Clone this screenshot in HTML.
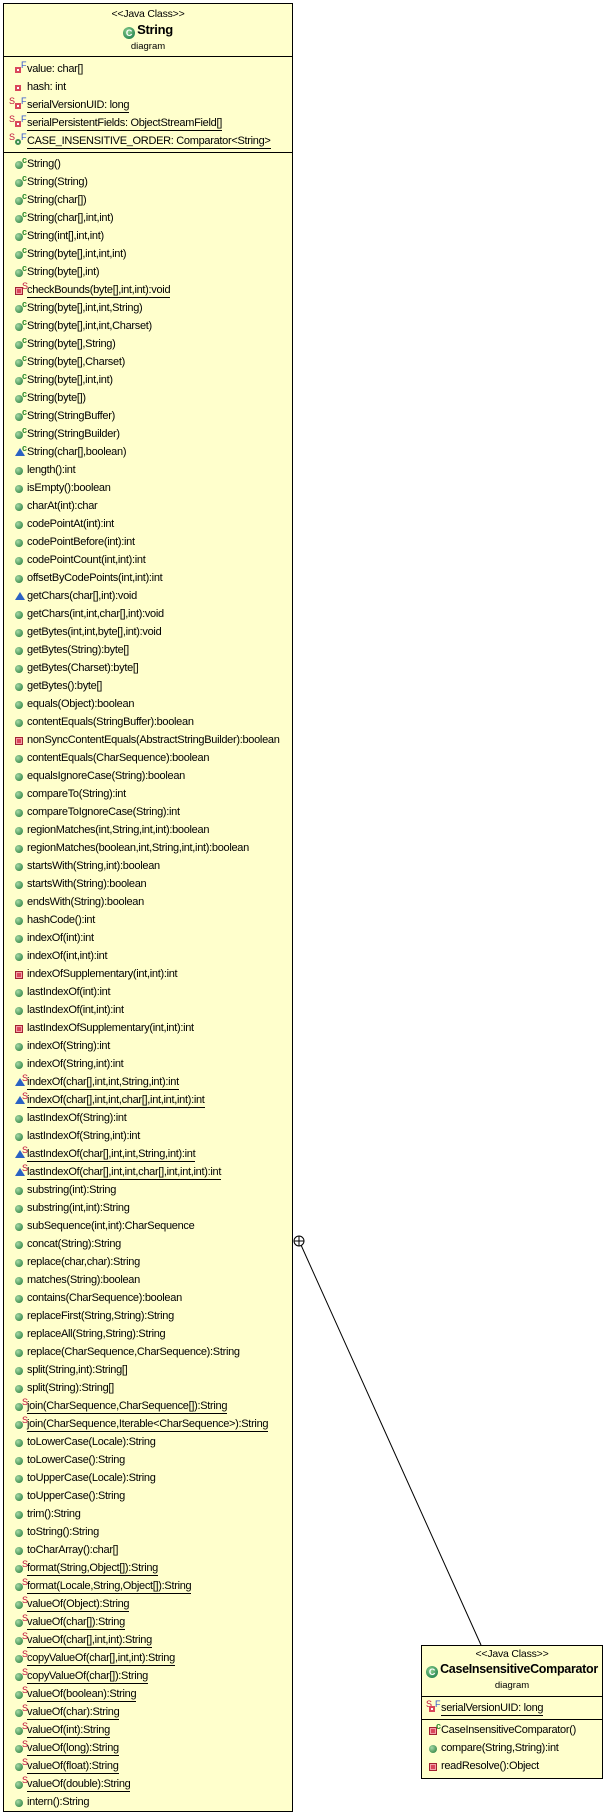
<!DOCTYPE html>
<html><head><meta charset="utf-8"><style>
*{margin:0;padding:0;box-sizing:border-box}
body{width:605px;height:1815px;background:#fff;position:relative;font-family:"Liberation Sans",sans-serif;font-size:11px;color:#000;overflow:hidden}
.box{position:absolute;background:#ffffcc;border:1px solid #000}
.hd{text-align:center;border-bottom:1px solid #000}
.st{font-size:10.5px;letter-spacing:-0.2px}
.tt{font-weight:bold;font-size:13px;letter-spacing:-0.3px}
.dg{font-size:9.5px}
.gc{display:inline-block;width:12px;height:12px;border-radius:50%;background:radial-gradient(circle at 40% 35%,#8fd28f,#2e8b57 70%);vertical-align:-2px;margin-right:2px;color:#fff;font-size:9px;line-height:12px;font-weight:bold;text-align:center}
.sec{border-bottom:1px solid #000}
.r{height:18px;line-height:18px;position:relative;padding-left:23px;white-space:nowrap;letter-spacing:-0.3px}
.t{display:inline-block;line-height:14px}
.u .t{border-bottom:1px solid #000}
.i{position:absolute;left:11px;top:6px}
.g{width:8px;height:8px;border-radius:50%;background:radial-gradient(circle at 35% 35%,#a6d8a6,#3e8e4e 75%)}
.q{width:8px;height:8px;background:#d9475a;border:1px solid #a02030;box-shadow:inset 0 0 0 1px #f3a0a8}
.b{width:0;height:0;border-left:5px solid transparent;border-right:5px solid transparent;border-bottom:8px solid #2b62c4;top:5px}
.p{position:absolute;left:18px;top:-4px;font-size:9px;letter-spacing:0}
.pc{color:#2e8b2e;font-weight:bold}
.ps{color:#c0103c}
.fi{position:absolute;left:11px;top:7px;width:6px;height:6px;background:#fff;border:2px solid #d9475a}
.ff{position:absolute;top:-4px;font-size:9px;color:#3355cc;letter-spacing:0}
.fs{position:absolute;left:7px;top:-4px;font-size:9px;color:#c0103c;letter-spacing:0}
</style></head><body>
<svg style="position:absolute;left:0;top:0" width="605" height="1815">
<line x1="301" y1="1245" x2="481" y2="1645" stroke="#000" stroke-width="1"/>
<circle cx="299" cy="1241" r="5" fill="#fff" stroke="#000"/>
<line x1="294" y1="1241" x2="304" y2="1241" stroke="#000"/>
<line x1="299" y1="1236" x2="299" y2="1246" stroke="#000"/>
</svg>

<div class="box" style="left:3px;top:3px;width:290px;height:1809px;border-width:1px">
<div class="hd" style="height:53px;padding-top:4px">
<div class="st" style="line-height:13px">&lt;&lt;Java Class&gt;&gt;</div>
<div style="line-height:17px"><span class="gc">C</span><span class="tt">String</span></div>
<div class="dg" style="line-height:14px">diagram</div>
</div>
<div class="sec" style="height:96px;padding-top:3px">
<div class="r"><span class="fi"></span><span class="ff" style="left:17px">F</span><span class="t">value: char[]</span></div>
<div class="r"><span class="fi"></span><span class="t">hash: int</span></div>
<div class="r u"><span class="fs" style="left:5px">S</span><span class="fi"></span><span class="ff" style="left:17px">F</span><span class="t">serialVersionUID: long</span></div>
<div class="r u"><span class="fs" style="left:5px">S</span><span class="fi"></span><span class="ff" style="left:17px">F</span><span class="t">serialPersistentFields: ObjectStreamField[]</span></div>
<div class="r u"><span class="fs" style="left:5px">S</span><span class="fi" style="border-color:#3e8e4e;border-radius:50%"></span><span class="ff" style="left:17px">F</span><span class="t">CASE_INSENSITIVE_ORDER: Comparator&lt;String&gt;</span></div>
</div>
<div style="padding-top:2px">
<div class="r"><span class="i g"></span><span class="p pc">c</span><span class="t">String()</span></div>
<div class="r"><span class="i g"></span><span class="p pc">c</span><span class="t">String(String)</span></div>
<div class="r"><span class="i g"></span><span class="p pc">c</span><span class="t">String(char[])</span></div>
<div class="r"><span class="i g"></span><span class="p pc">c</span><span class="t">String(char[],int,int)</span></div>
<div class="r"><span class="i g"></span><span class="p pc">c</span><span class="t">String(int[],int,int)</span></div>
<div class="r"><span class="i g"></span><span class="p pc">c</span><span class="t">String(byte[],int,int,int)</span></div>
<div class="r"><span class="i g"></span><span class="p pc">c</span><span class="t">String(byte[],int)</span></div>
<div class="r u"><span class="i q"></span><span class="p ps">S</span><span class="t">checkBounds(byte[],int,int):void</span></div>
<div class="r"><span class="i g"></span><span class="p pc">c</span><span class="t">String(byte[],int,int,String)</span></div>
<div class="r"><span class="i g"></span><span class="p pc">c</span><span class="t">String(byte[],int,int,Charset)</span></div>
<div class="r"><span class="i g"></span><span class="p pc">c</span><span class="t">String(byte[],String)</span></div>
<div class="r"><span class="i g"></span><span class="p pc">c</span><span class="t">String(byte[],Charset)</span></div>
<div class="r"><span class="i g"></span><span class="p pc">c</span><span class="t">String(byte[],int,int)</span></div>
<div class="r"><span class="i g"></span><span class="p pc">c</span><span class="t">String(byte[])</span></div>
<div class="r"><span class="i g"></span><span class="p pc">c</span><span class="t">String(StringBuffer)</span></div>
<div class="r"><span class="i g"></span><span class="p pc">c</span><span class="t">String(StringBuilder)</span></div>
<div class="r"><span class="i b"></span><span class="p pc">c</span><span class="t">String(char[],boolean)</span></div>
<div class="r"><span class="i g"></span><span class="t">length():int</span></div>
<div class="r"><span class="i g"></span><span class="t">isEmpty():boolean</span></div>
<div class="r"><span class="i g"></span><span class="t">charAt(int):char</span></div>
<div class="r"><span class="i g"></span><span class="t">codePointAt(int):int</span></div>
<div class="r"><span class="i g"></span><span class="t">codePointBefore(int):int</span></div>
<div class="r"><span class="i g"></span><span class="t">codePointCount(int,int):int</span></div>
<div class="r"><span class="i g"></span><span class="t">offsetByCodePoints(int,int):int</span></div>
<div class="r"><span class="i b"></span><span class="t">getChars(char[],int):void</span></div>
<div class="r"><span class="i g"></span><span class="t">getChars(int,int,char[],int):void</span></div>
<div class="r"><span class="i g"></span><span class="t">getBytes(int,int,byte[],int):void</span></div>
<div class="r"><span class="i g"></span><span class="t">getBytes(String):byte[]</span></div>
<div class="r"><span class="i g"></span><span class="t">getBytes(Charset):byte[]</span></div>
<div class="r"><span class="i g"></span><span class="t">getBytes():byte[]</span></div>
<div class="r"><span class="i g"></span><span class="t">equals(Object):boolean</span></div>
<div class="r"><span class="i g"></span><span class="t">contentEquals(StringBuffer):boolean</span></div>
<div class="r"><span class="i q"></span><span class="t">nonSyncContentEquals(AbstractStringBuilder):boolean</span></div>
<div class="r"><span class="i g"></span><span class="t">contentEquals(CharSequence):boolean</span></div>
<div class="r"><span class="i g"></span><span class="t">equalsIgnoreCase(String):boolean</span></div>
<div class="r"><span class="i g"></span><span class="t">compareTo(String):int</span></div>
<div class="r"><span class="i g"></span><span class="t">compareToIgnoreCase(String):int</span></div>
<div class="r"><span class="i g"></span><span class="t">regionMatches(int,String,int,int):boolean</span></div>
<div class="r"><span class="i g"></span><span class="t">regionMatches(boolean,int,String,int,int):boolean</span></div>
<div class="r"><span class="i g"></span><span class="t">startsWith(String,int):boolean</span></div>
<div class="r"><span class="i g"></span><span class="t">startsWith(String):boolean</span></div>
<div class="r"><span class="i g"></span><span class="t">endsWith(String):boolean</span></div>
<div class="r"><span class="i g"></span><span class="t">hashCode():int</span></div>
<div class="r"><span class="i g"></span><span class="t">indexOf(int):int</span></div>
<div class="r"><span class="i g"></span><span class="t">indexOf(int,int):int</span></div>
<div class="r"><span class="i q"></span><span class="t">indexOfSupplementary(int,int):int</span></div>
<div class="r"><span class="i g"></span><span class="t">lastIndexOf(int):int</span></div>
<div class="r"><span class="i g"></span><span class="t">lastIndexOf(int,int):int</span></div>
<div class="r"><span class="i q"></span><span class="t">lastIndexOfSupplementary(int,int):int</span></div>
<div class="r"><span class="i g"></span><span class="t">indexOf(String):int</span></div>
<div class="r"><span class="i g"></span><span class="t">indexOf(String,int):int</span></div>
<div class="r u"><span class="i b"></span><span class="p ps">S</span><span class="t">indexOf(char[],int,int,String,int):int</span></div>
<div class="r u"><span class="i b"></span><span class="p ps">S</span><span class="t">indexOf(char[],int,int,char[],int,int,int):int</span></div>
<div class="r"><span class="i g"></span><span class="t">lastIndexOf(String):int</span></div>
<div class="r"><span class="i g"></span><span class="t">lastIndexOf(String,int):int</span></div>
<div class="r u"><span class="i b"></span><span class="p ps">S</span><span class="t">lastIndexOf(char[],int,int,String,int):int</span></div>
<div class="r u"><span class="i b"></span><span class="p ps">S</span><span class="t">lastIndexOf(char[],int,int,char[],int,int,int):int</span></div>
<div class="r"><span class="i g"></span><span class="t">substring(int):String</span></div>
<div class="r"><span class="i g"></span><span class="t">substring(int,int):String</span></div>
<div class="r"><span class="i g"></span><span class="t">subSequence(int,int):CharSequence</span></div>
<div class="r"><span class="i g"></span><span class="t">concat(String):String</span></div>
<div class="r"><span class="i g"></span><span class="t">replace(char,char):String</span></div>
<div class="r"><span class="i g"></span><span class="t">matches(String):boolean</span></div>
<div class="r"><span class="i g"></span><span class="t">contains(CharSequence):boolean</span></div>
<div class="r"><span class="i g"></span><span class="t">replaceFirst(String,String):String</span></div>
<div class="r"><span class="i g"></span><span class="t">replaceAll(String,String):String</span></div>
<div class="r"><span class="i g"></span><span class="t">replace(CharSequence,CharSequence):String</span></div>
<div class="r"><span class="i g"></span><span class="t">split(String,int):String[]</span></div>
<div class="r"><span class="i g"></span><span class="t">split(String):String[]</span></div>
<div class="r u"><span class="i g"></span><span class="p ps">S</span><span class="t">join(CharSequence,CharSequence[]):String</span></div>
<div class="r u"><span class="i g"></span><span class="p ps">S</span><span class="t">join(CharSequence,Iterable&lt;CharSequence&gt;):String</span></div>
<div class="r"><span class="i g"></span><span class="t">toLowerCase(Locale):String</span></div>
<div class="r"><span class="i g"></span><span class="t">toLowerCase():String</span></div>
<div class="r"><span class="i g"></span><span class="t">toUpperCase(Locale):String</span></div>
<div class="r"><span class="i g"></span><span class="t">toUpperCase():String</span></div>
<div class="r"><span class="i g"></span><span class="t">trim():String</span></div>
<div class="r"><span class="i g"></span><span class="t">toString():String</span></div>
<div class="r"><span class="i g"></span><span class="t">toCharArray():char[]</span></div>
<div class="r u"><span class="i g"></span><span class="p ps">S</span><span class="t">format(String,Object[]):String</span></div>
<div class="r u"><span class="i g"></span><span class="p ps">S</span><span class="t">format(Locale,String,Object[]):String</span></div>
<div class="r u"><span class="i g"></span><span class="p ps">S</span><span class="t">valueOf(Object):String</span></div>
<div class="r u"><span class="i g"></span><span class="p ps">S</span><span class="t">valueOf(char[]):String</span></div>
<div class="r u"><span class="i g"></span><span class="p ps">S</span><span class="t">valueOf(char[],int,int):String</span></div>
<div class="r u"><span class="i g"></span><span class="p ps">S</span><span class="t">copyValueOf(char[],int,int):String</span></div>
<div class="r u"><span class="i g"></span><span class="p ps">S</span><span class="t">copyValueOf(char[]):String</span></div>
<div class="r u"><span class="i g"></span><span class="p ps">S</span><span class="t">valueOf(boolean):String</span></div>
<div class="r u"><span class="i g"></span><span class="p ps">S</span><span class="t">valueOf(char):String</span></div>
<div class="r u"><span class="i g"></span><span class="p ps">S</span><span class="t">valueOf(int):String</span></div>
<div class="r u"><span class="i g"></span><span class="p ps">S</span><span class="t">valueOf(long):String</span></div>
<div class="r u"><span class="i g"></span><span class="p ps">S</span><span class="t">valueOf(float):String</span></div>
<div class="r u"><span class="i g"></span><span class="p ps">S</span><span class="t">valueOf(double):String</span></div>
<div class="r"><span class="i g"></span><span class="t">intern():String</span></div>
</div>
</div>

<div class="box" style="left:421px;top:1645px;width:182px;height:134px">
<div class="hd" style="height:51px;padding-top:2px">
<div class="st" style="line-height:13px">&lt;&lt;Java Class&gt;&gt;</div>
<div style="line-height:17px;white-space:nowrap"><span class="gc">C</span><span class="tt" style="font-size:12.5px">CaseInsensitiveComparator</span></div>
<div class="dg" style="line-height:13px">diagram</div>
</div>
<div class="sec" style="height:23px;padding-top:2px">
<div class="r u" style="padding-left:19px"><span class="fs" style="left:4px">S</span><span class="fi" style="left:7px"></span><span class="ff" style="left:13px">F</span><span class="t">serialVersionUID: long</span></div>
</div>
<div style="padding-top:1px">
<div class="r" style="padding-left:19px"><span class="i q" style="left:7px"></span><span class="p pc" style="left:14px">c</span><span class="t">CaseInsensitiveComparator()</span></div>
<div class="r" style="padding-left:19px"><span class="i g" style="left:7px"></span><span class="t">compare(String,String):int</span></div>
<div class="r" style="padding-left:19px"><span class="i q" style="left:7px"></span><span class="t">readResolve():Object</span></div>
</div>
</div>
</body></html>
